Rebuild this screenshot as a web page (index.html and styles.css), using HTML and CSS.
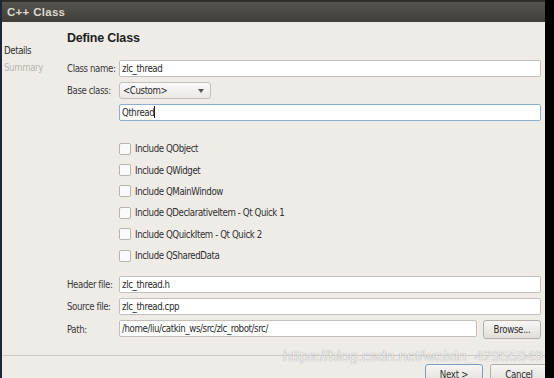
FILE: index.html
```html
<!DOCTYPE html>
<html lang="en">
<head>
  <meta charset="UTF-8" />
  <title>C++ Class</title>
  <link rel="stylesheet" href="styles.css">
</head>
<body>
  <div class="screen">
    <div class="edge-left"></div>

    <div class="window">
      <div class="titlebar">C++ Class</div>

      <div class="content">
        <!-- Wizard steps -->
        <ul class="steps">
          <li class="current">Details</li>
          <li>Summary</li>
        </ul>

        <div class="page">
          <h1>Define Class</h1>

          <div class="form">
            <label>Class name:</label>
            <div class="field">zlc_thread</div>

            <label>Base class:</label>
            <div class="combo">&lt;Custom&gt;<span class="arrow"></span></div>

            <span></span>
            <div class="field focused">Qthread<span class="caret"></span></div>
          </div>

          <ul class="checks">
            <li><span class="box"></span>Include QObject</li>
            <li><span class="box"></span>Include QWidget</li>
            <li><span class="box"></span>Include QMainWindow</li>
            <li><span class="box"></span>Include QDeclarativeItem - Qt Quick 1</li>
            <li><span class="box"></span>Include QQuickItem - Qt Quick 2</li>
            <li><span class="box"></span>Include QSharedData</li>
          </ul>

          <div class="form files">
            <label>Header file:</label>
            <div class="field">zlc_thread.h</div>

            <label>Source file:</label>
            <div class="field">zlc_thread.cpp</div>

            <label>Path:</label>
            <div class="path-row">
              <div class="field">/home/liu/catkin_ws/src/zlc_robot/src/</div>
              <button class="btn browse">Browse...</button>
            </div>
          </div>
        </div>
      </div>

      <div class="footer">
        <button class="btn default">Next &gt;</button>
        <button class="btn">Cancel</button>
      </div>

      <div class="watermark">https://blog.csdn.net/weixin_42355349</div>
    </div>

    <div class="edge-right"></div>
  </div>
</body>
</html>
```

FILE: styles.css
```css
/* Base */
html, body {
  margin: 0;
  padding: 0;
  height: 100%;
  overflow: hidden;
}
body {
  font-family: "DejaVu Sans Condensed", "Liberation Sans", sans-serif;
  font-size: 9.6px;
  letter-spacing: -0.4px;
  color: #3c3c3c;
  background: #000;
}
.screen {
  display: flex;
  height: 378px;
}
.edge-left {
  width: 2px;
  background: #1c2440;
}
.edge-right {
  flex: 1;
  background: #000;
}
/* Window frame */
.window {
  position: relative;
  width: 543px;
  overflow: hidden;
  display: flex;
  flex-direction: column;
  background: #efece8;
  border-top: 2px solid #2e2e2c;
}
.titlebar {
  height: 20px;
  line-height: 20px;
  padding-left: 5px;
  font-family: "Liberation Sans", sans-serif;
  font-weight: bold;
  font-size: 11.5px;
  letter-spacing: 0.3px;
  color: #dcd8cf;
  background: linear-gradient(#56544e, #3f3e3a);
}
.content {
  display: flex;
}
/* Steps sidebar */
.steps {
  list-style: none;
  margin: 0;
  padding: 20px 0 0 2px;
  width: 63px;
}
.steps li {
  height: 17px;
  line-height: 17px;
  color: #b9b6b0;
}
.steps li.current {
  color: #2f2f2f;
}
/* Page */
.page {
  flex: 1;
  padding-right: 4px;
}
h1 {
  margin: 8px 0 13px;
  font-family: "Liberation Sans", sans-serif;
  font-size: 12.5px;
  letter-spacing: -0.2px;
  font-weight: bold;
  color: #1e1e1e;
  line-height: 17px;
}
.form {
  display: grid;
  grid-template-columns: 52px 1fr;
  row-gap: 5px;
  align-items: center;
}
.form label {
  color: #3a3a3a;
  white-space: nowrap;
}
.field {
  height: 15px;
  line-height: 15px;
  padding: 0 2px;
  background: #fff;
  border: 1px solid #c4c0b9;
  border-radius: 2px;
  color: #2a2a2a;
  white-space: nowrap;
}
.field.focused {
  border-color: #8aaed3;
}
.caret {
  display: inline-block;
  width: 1px;
  height: 12px;
  background: #222;
  vertical-align: -2px;
}
.combo {
  position: relative;
  width: 84px;
  height: 15px;
  line-height: 15px;
  padding: 0 3px;
  background: linear-gradient(#fbfaf9, #ebe8e4);
  border: 1px solid #c4c0b9;
  border-radius: 3px;
  color: #2a2a2a;
}
.arrow {
  position: absolute;
  right: 6px;
  top: 6px;
  border-left: 3px solid transparent;
  border-right: 3px solid transparent;
  border-top: 4px solid #555;
}
/* Checkboxes */
.checks {
  list-style: none;
  margin: 17px 0 0 52px;
  padding: 0;
}
.checks li {
  display: flex;
  align-items: center;
  height: 21.4px;
  color: #2f2f2f;
}
.box {
  width: 10px;
  height: 10px;
  margin-right: 4px;
  background: #fbfaf9;
  border: 1px solid #b8b4ad;
  border-radius: 2px;
}
.files {
  margin-top: 10px;
}
.path-row {
  display: flex;
  gap: 6px;
}
.path-row .field {
  flex: 1;
}
/* Buttons */
.btn {
  font-family: inherit;
  font-size: 9.6px;
  letter-spacing: -0.3px;
  color: #2f2f2f;
  height: 19px;
  padding: 0 6px;
  background: linear-gradient(#f7f6f4, #e2dfda);
  border: 1px solid #b3afa8;
  border-radius: 3px;
}
.browse {
  width: 58px;
}
.footer {
  display: flex;
  justify-content: flex-end;
  gap: 7px;
  margin-top: 16px;
  padding-top: 8px;
  border-top: 1px solid #cbc7c1;
}
.footer .btn {
  flex: none;
  width: 58px;
  height: 20px;
}
.footer .btn:last-child {
  margin-right: -3px;
}
.btn.default {
  border-color: #7d9ec4;
}
/* Blog watermark over the screenshot */
.watermark {
  position: absolute;
  left: 281px;
  top: 345px;
  font-family: "Liberation Sans", sans-serif;
  font-size: 15.5px;
  letter-spacing: -0.1px;
  color: rgba(250, 250, 250, 0.85);
  text-shadow: 0 0 1px #8c8c8c;
  white-space: nowrap;
}
```
